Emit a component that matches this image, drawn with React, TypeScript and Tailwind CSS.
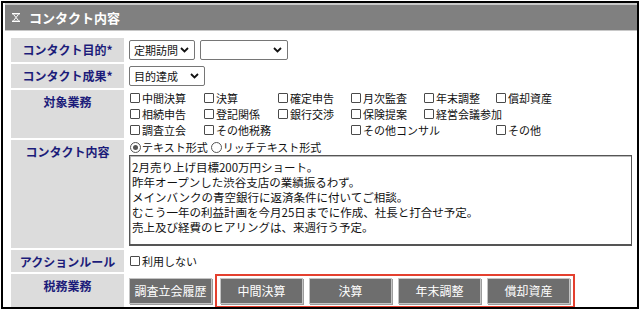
import React from "react";

const checks: { label: string; col: string }[] = [
  { label: "中間決算", col: "col-start-1" },
  { label: "決算", col: "col-start-2" },
  { label: "確定申告", col: "col-start-3" },
  { label: "月次監査", col: "col-start-4" },
  { label: "年末調整", col: "col-start-5" },
  { label: "償却資産", col: "col-start-6" },
  { label: "相続申告", col: "col-start-1" },
  { label: "登記関係", col: "col-start-2" },
  { label: "銀行交渉", col: "col-start-3" },
  { label: "保険提案", col: "col-start-4" },
  { label: "経営会議参加", col: "col-start-5 col-span-2" },
  { label: "調査立会", col: "col-start-1" },
  { label: "その他税務", col: "col-start-2" },
  { label: "その他コンサル", col: "col-start-4 col-span-2" },
  { label: "その他", col: "col-start-6" },
];

const memo = [
  "2月売り上げ目標200万円ショート。",
  "昨年オープンした渋谷支店の業績振るわず。",
  "メインバンクの青空銀行に返済条件に付いてご相談。",
  "むこう一年の利益計画を今月25日までに作成、社長と打合せ予定。",
  "売上及び経費のヒアリングは、来週行う予定。",
];

function Box() {
  return <span className="mr-[2px] h-[10px] w-[10px] shrink-0 rounded-[1px] border border-[#4a4a4a] bg-white" />;
}

function Check({ label, className = "" }: { label: string; className?: string }) {
  return (
    <span className={`flex items-center whitespace-nowrap ${className}`}>
      <Box />
      {label}
    </span>
  );
}

function Radio({ on }: { on?: boolean }) {
  return (
    <span className="mr-px flex h-[11px] w-[11px] items-center justify-center rounded-full border border-[#555] bg-white">
      {on && <span className="h-[5px] w-[5px] rounded-full bg-[#555]" />}
    </span>
  );
}

function Chevron() {
  return (
    <svg width="9" height="6" viewBox="0 0 9 6" className="shrink-0">
      <path d="M1 1l3.5 3.5L8 1" fill="none" stroke="#111" strokeWidth="1.8" />
    </svg>
  );
}

function Select({ value, w }: { value: string; w: string }) {
  return (
    <div className={`flex h-[20px] items-center justify-between rounded-[2px] border border-[#767676] bg-white pl-[4px] pr-[5px] ${w}`}>
      <span>{value}</span>
      <Chevron />
    </div>
  );
}

function Label({ children }: { children: React.ReactNode }) {
  return (
    <div className="bg-[#dcdcdc] pt-[4px] text-center text-[12px] leading-[16px] font-bold text-[#1c1c7a]">
      {children}
    </div>
  );
}

function Btn({ children }: { children: React.ReactNode }) {
  return (
    <div className="flex h-[26px] w-[83px] items-center justify-center border border-[#c4c4c4] bg-[#6e6e6e] text-[12px] text-white shadow-[1px_1px_0_#9c9c9c]">
      {children}
    </div>
  );
}

export default function App() {
  return (
    <div className="h-[310px] w-[640px] bg-white pl-px pt-px font-['Noto_Sans_CJK_JP','Liberation_Sans',sans-serif] text-[11px] text-[#111]">
      <div className="h-[308px] w-[638px] overflow-hidden border-2 border-black pl-[2px]">
        <div className="flex h-[28px] items-center gap-[9px] border-t-2 border-b border-[#c8c8c8] bg-[#808080] pl-[7px] text-[13px] font-bold text-white">
          <svg width="8" height="9" viewBox="0 0 8 9">
            <rect x="0" y="0" width="8" height="1.4" fill="#fff" />
            <rect x="0" y="7.6" width="8" height="1.4" fill="#fff" />
            <path d="M1.5 1.4L4 4.5L1.5 7.6M6.5 1.4L4 4.5L6.5 7.6" fill="none" stroke="#fff" strokeWidth="1" />
          </svg>
          <span>コンタクト内容</span>
        </div>

        <div className="ml-[6px] mt-[7px] grid w-[621px] grid-cols-[113px_1fr] gap-x-[3px] gap-y-[2px]">
          <Label>コンタクト目的*</Label>
          <div className="flex h-[24px] gap-[5px] pl-[2px] pt-[2px]">
            <Select value="定期訪問" w="w-[66px]" />
            <Select value="" w="w-[88px]" />
          </div>

          <Label>コンタクト成果*</Label>
          <div className="flex h-[24px] pl-[2px] pt-[2px]">
            <Select value="目的達成" w="w-[76px]" />
          </div>

          <Label>対象業務</Label>
          <div className="grid h-[48px] grid-cols-[74px_74px_73px_73px_72px_auto] pl-[3px] leading-[16px]">
            {checks.map((c) => (
              <Check key={c.label} label={c.label} className={c.col} />
            ))}
          </div>

          <Label>コンタクト内容</Label>
          <div className="flex h-[108px] flex-col pl-[2px]">
            <div className="flex h-[15px] items-center pl-px">
              <Radio on />
              <span className="mr-[3px]">テキスト形式</span>
              <Radio />
              <span>リッチテキスト形式</span>
            </div>
            <div className="h-[91px] border border-b-2 border-[#555] bg-white pl-[2px] pt-[4px] text-[11.5px] leading-[15px] shadow-[inset_1px_1px_0_#bbb]">
              {memo.map((m) => (
                <div key={m}>{m}</div>
              ))}
            </div>
          </div>

          <Label>アクションルール</Label>
          <div className="flex h-[22px] items-center pl-[3px]">
            <Check label="利用しない" />
          </div>

          <Label>税務業務</Label>
          <div className="flex h-[40px] items-start gap-[3px] pl-[2px]">
            <div className="pt-[4px]">
              <Btn>調査立会履歴</Btn>
            </div>
            <div className="flex gap-[6px] border-2 border-[#e4402f] px-[3px] py-[2px]">
              <Btn>中間決算</Btn>
              <Btn>決算</Btn>
              <Btn>年末調整</Btn>
              <Btn>償却資産</Btn>
            </div>
          </div>
        </div>
      </div>
    </div>
  );
}
